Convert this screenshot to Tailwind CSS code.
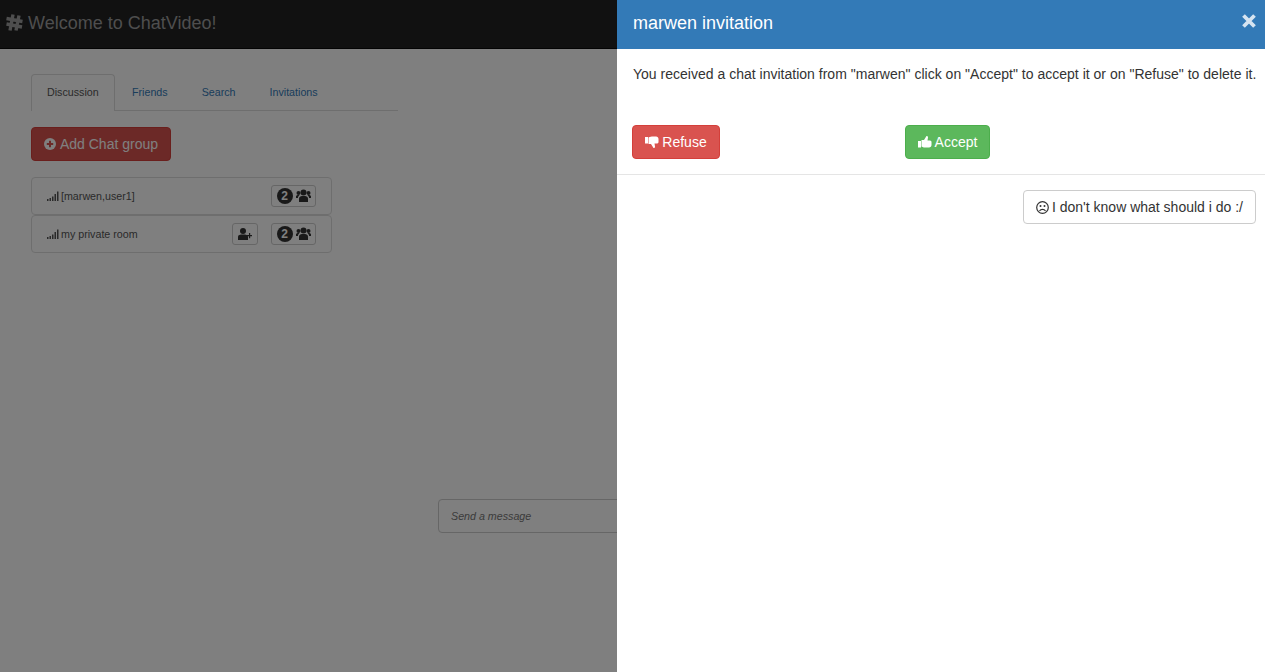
<!DOCTYPE html>
<html lang="en">
<head>
  <meta charset="UTF-8" />
  <title>ChatVideo</title>
  <script src="https://cdn.jsdelivr.net/npm/@tailwindcss/browser@4"></script>
</head>
<body class="bg-white text-[#333] font-['Liberation_Sans',Arial,sans-serif] h-[672px] overflow-hidden">
  <!-- page under the overlay -->
  <nav class="h-[49px] bg-[#222] border-b border-[#080808] flex items-center pl-[6px] gap-[5px] pb-[3px] text-[#9d9d9d]">
    <svg class="w-[17px] h-[17px]" viewBox="0 0 17 17" fill="none" stroke="currentColor" stroke-width="3.400"><path d="M7 .5L4 16.500M13 1.500L10 16.500M.5 4.500L16.500 7.500M.5 10L16 13"/></svg>
    <span class="text-[18px] leading-none">Welcome to ChatVideo!</span>
  </nav>

  <main class="flex pt-[25px] pl-[31px]">
    <section class="w-[367px]">
      <div class="flex h-[37px] border-b border-[#ddd] text-[10.7px] text-[#337ab7]">
        <div class="w-[84px] h-[37px] pl-[15px] pb-[1px] flex items-center border border-[#ddd] border-b-0 rounded-t bg-white text-[#555]">Discussion</div>
        <div class="ml-[17px] flex items-center">Friends</div>
        <div class="ml-[34px] flex items-center">Search</div>
        <div class="ml-[34px] flex items-center">Invitations</div>
      </div>

      <button class="mt-[16px] h-[34px] w-[140px] flex items-center justify-center gap-[4px] rounded bg-[#d9534f] border border-[#d43f3a] text-white text-[14px]">
        <svg class="w-[12px] h-[12px]" viewBox="0 0 12 12"><circle cx="6" cy="6" r="6" fill="#fff"/><path d="M2.800 5h2.200V2.800h2V5h2.200v2H7v2.200H5V7H2.800z" fill="#d9534f"/></svg>
        Add Chat group
      </button>

      <ul class="mt-[16px] w-[301px] text-[10.7px] text-[#555]">
        <li class="h-[38px] pl-[15px] pr-[15px] flex items-center border border-[#ddd] rounded">
          <svg class="w-[12px] h-[10px] mr-[2px]" viewBox="0 0 12 10" fill="#555"><rect x="0" y="8" width="1.500" height="2"/><rect x="2.500" y="7" width="1.500" height="3"/><rect x="5" y="5.500" width="1.500" height="4.500"/><rect x="7.500" y="3" width="1.500" height="7"/><rect x="10" y="0.500" width="1.500" height="9.500"/></svg>
          <span>[marwen,user1]</span>
          <span class="ml-auto w-[45px] h-[22px] flex items-center justify-center gap-[3px] border border-[#ccc] rounded-[3px]">
            <span class="w-[16px] h-[16px] rounded-full bg-[#333] text-white text-[12px] font-bold flex items-center justify-center">2</span>
            <svg class="w-[15px] h-[14px]" viewBox="0 0 15 14" fill="#333"><circle cx="7.500" cy="3.500" r="3"/><circle cx="2.500" cy="4" r="2"/><circle cx="12.500" cy="4" r="2"/><path d="M3 13V9.500C3 7.500 5 7 7.500 7s4.500.5 4.500 2.500V13z"/><path d="M0 9V7.500C0 6.500 1 6 2.500 6H3.500L2 8v1zM15 9V7.500C15 6.500 14 6 12.500 6H11.500L13 8v1z"/></svg>
          </span>
        </li>
        <li class="h-[38px] pl-[15px] pr-[15px] flex items-center border border-[#ddd] rounded">
          <svg class="w-[12px] h-[10px] mr-[2px]" viewBox="0 0 12 10" fill="#555"><rect x="0" y="8" width="1.500" height="2"/><rect x="2.500" y="7" width="1.500" height="3"/><rect x="5" y="5.500" width="1.500" height="4.500"/><rect x="7.500" y="3" width="1.500" height="7"/><rect x="10" y="0.500" width="1.500" height="9.500"/></svg>
          <span>my private room</span>
          <span class="ml-auto w-[26px] h-[22px] flex items-center justify-center border border-[#ccc] rounded-[3px]">
            <svg class="w-[14px] h-[12px]" viewBox="0 0 14 12" fill="#333"><circle cx="5" cy="3" r="3"/><path d="M0 12V8.500C0 7 2 6.500 5 6.500s5 .5 5 2V12z"/><path d="M9 7h2V5h1.200v2H14v1.200h-1.800v2H11v-2H9z"/></svg>
          </span>
          <span class="ml-[13px] w-[45px] h-[22px] flex items-center justify-center gap-[3px] border border-[#ccc] rounded-[3px]">
            <span class="w-[16px] h-[16px] rounded-full bg-[#333] text-white text-[12px] font-bold flex items-center justify-center">2</span>
            <svg class="w-[15px] h-[14px]" viewBox="0 0 15 14" fill="#333"><circle cx="7.500" cy="3.500" r="3"/><circle cx="2.500" cy="4" r="2"/><circle cx="12.500" cy="4" r="2"/><path d="M3 13V9.500C3 7.500 5 7 7.500 7s4.500.5 4.500 2.500V13z"/><path d="M0 9V7.500C0 6.500 1 6 2.500 6H3.500L2 8v1zM15 9V7.500C15 6.500 14 6 12.500 6H11.500L13 8v1z"/></svg>
          </span>
        </li>
      </ul>
    </section>

    <section class="ml-[40px] pt-[425px] w-[400px]">
      <div class="h-[34px] pl-[12px] flex items-center border border-[#ccc] rounded text-[10.7px] italic text-[#777]">Send a message</div>
    </section>
  </main>

  <div class="fixed inset-0 bg-black/50"></div>

  <!-- invitation panel -->
  <aside class="fixed top-0 right-0 bottom-0 w-[648px] bg-white text-[14px]">
    <header class="h-[49px] bg-[#337ab7] text-white flex items-center pl-[16px] pr-[9px]">
      <h2 class="text-[18px] leading-none mb-[3px]">marwen invitation</h2>
      <svg class="ml-auto mb-[7px] w-[14px] h-[14px] text-white/80" viewBox="0 0 14 14" fill="none" stroke="currentColor" stroke-width="3.800"><path d="M1.500 1.500l11 11M12.500 1.500l-11 11"/></svg>
    </header>
    <p class="pl-[16px] mt-[15px] leading-[20px] tracking-[0.01px] whitespace-nowrap">You received a chat invitation from "marwen" click on "Accept" to accept it or on "Refuse" to delete it.</p>
    <div class="flex mt-[41px] pl-[15px] pb-[15px] border-b border-[#e5e5e5]">
      <button class="h-[34px] w-[88px] flex items-center justify-center gap-[3px] rounded bg-[#d9534f] border border-[#d43f3a] text-white">
        <svg class="w-[14px] h-[14px]" viewBox="0 0 14 14" fill="#fff"><rect x="0" y="2" width="3" height="6.500"/><path d="M3.500 2.500C5 1.500 6.500 1.500 8 1.500h3c1.500 0 2.500 1 2.500 2.500v3c0 1-1 1.500-2 1.500H9.500l.5 3c0 1-.5 1.500-1.500 1.500L6 9H3.500z"/></svg>
        Refuse
      </button>
      <button class="ml-[185px] h-[34px] w-[85px] flex items-center justify-center gap-[3px] rounded bg-[#5cb85c] border border-[#4cae4c] text-white">
        <svg class="w-[14px] h-[14px]" viewBox="0 0 14 14" fill="#fff"><rect x="0" y="6" width="3" height="6.500"/><path d="M3.500 11.500C5 12.500 6.500 12.500 8 12.500h3c1.500 0 2.500-1 2.500-2.500V7c0-1-1-1.500-2-1.500H9.500l.5-3C10 1.500 9.500 1 8.500 1L6 5H3.500z"/></svg>
        Accept
      </button>
    </div>
    <div class="flex justify-end pt-[15px] pr-[9px]">
      <button class="h-[34px] w-[233px] flex items-center justify-center gap-[3px] rounded bg-white border border-[#ccc] text-[#333]">
        <svg class="w-[13px] h-[13px]" viewBox="0 0 13 13" fill="none" stroke="#333" stroke-width="1.200"><circle cx="6.500" cy="6.500" r="5.800"/><circle cx="4.500" cy="5" r="1" fill="#333" stroke="none"/><circle cx="8.500" cy="5" r="1" fill="#333" stroke="none"/><path d="M3.500 9.800c1.500-2 4.500-2 6 0"/></svg>
        I don't know what should i do :/
      </button>
    </div>
  </aside>
</body>
</html>
